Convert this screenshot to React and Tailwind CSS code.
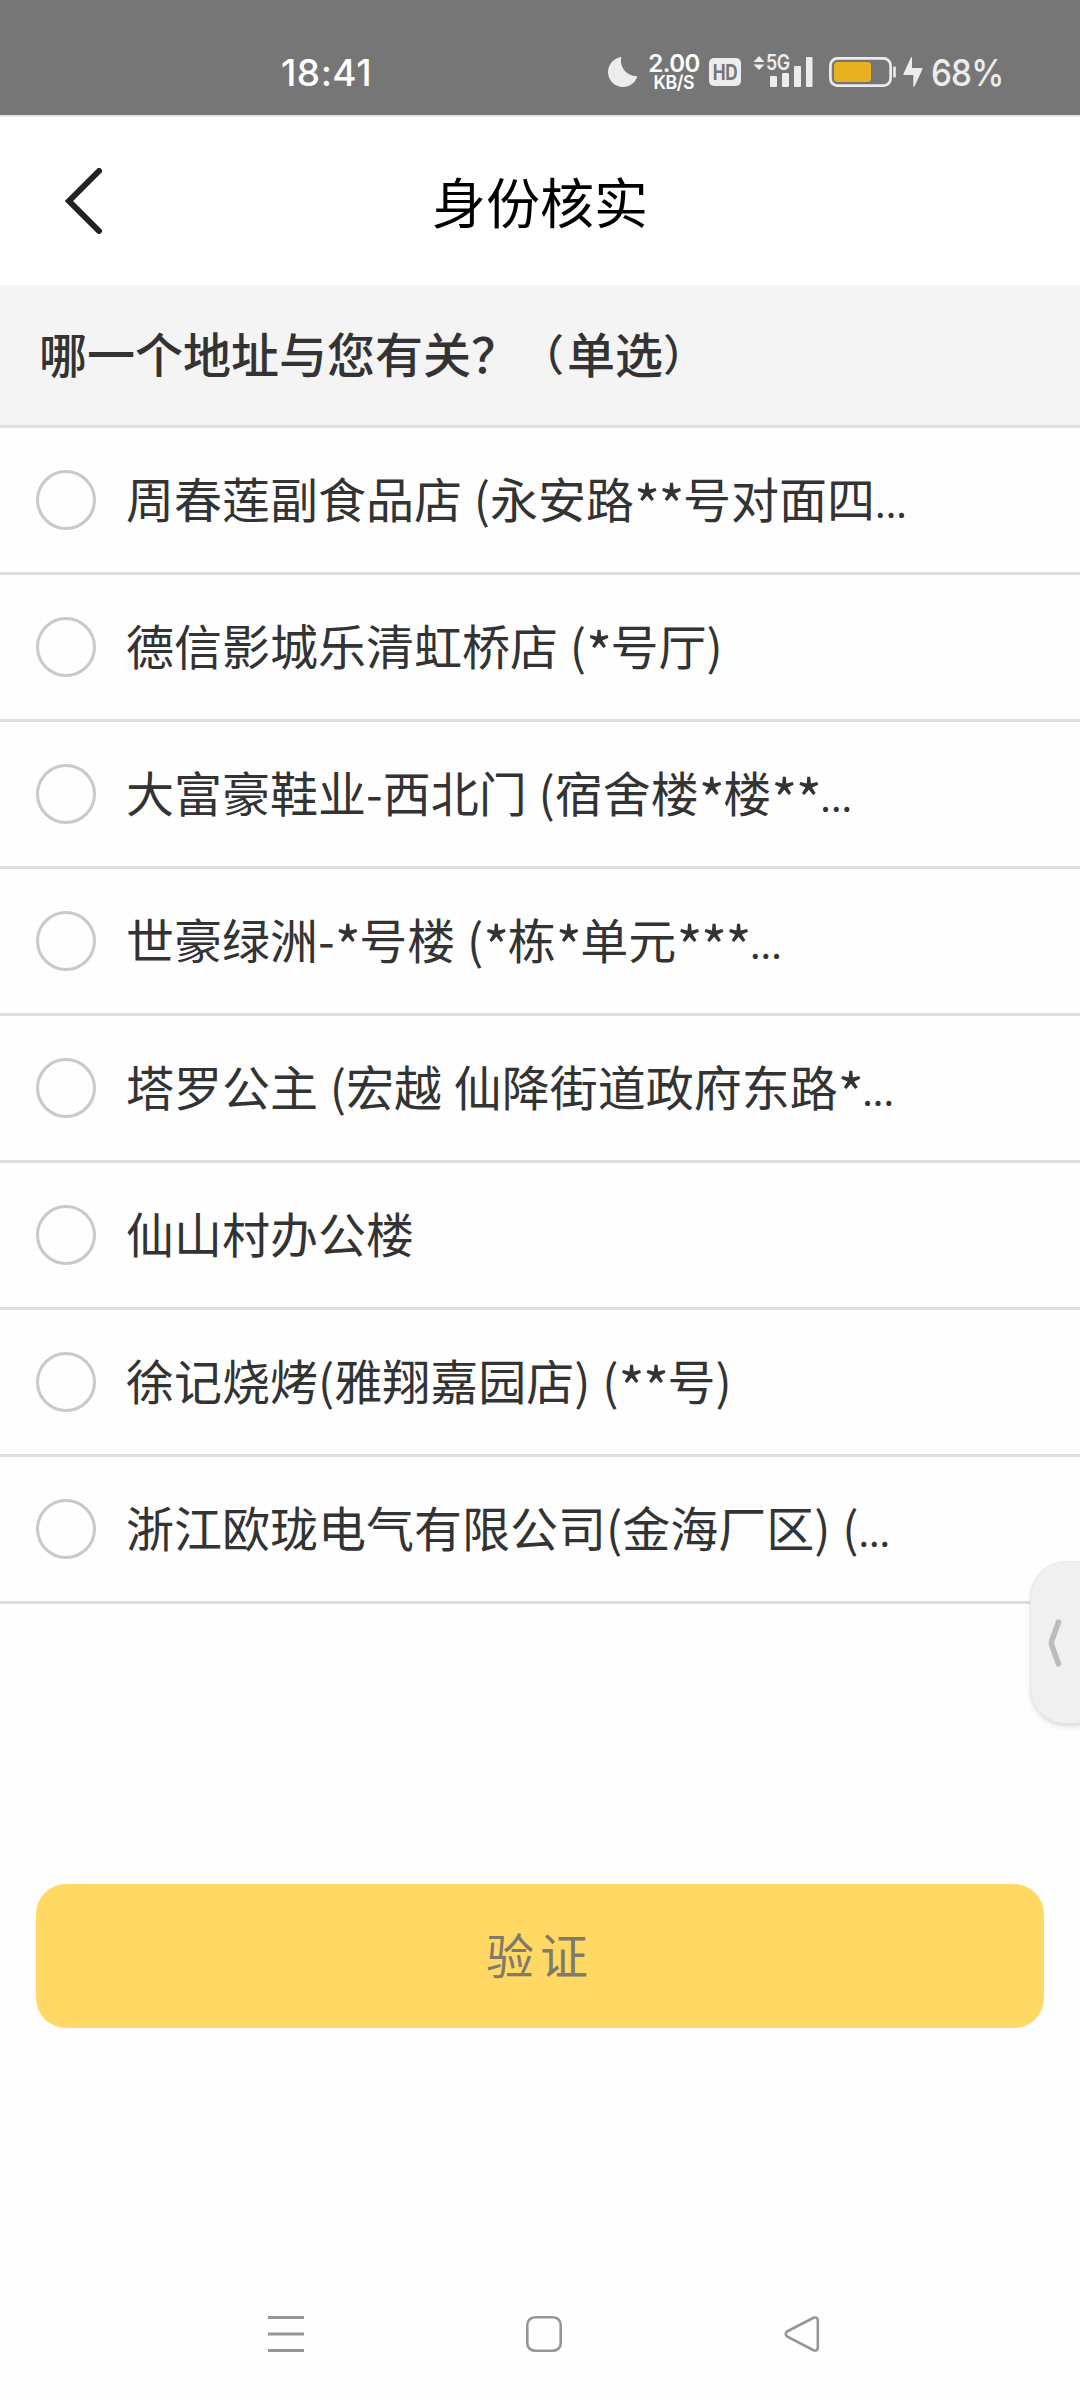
import React, { useState } from 'react';

const addresses = [
    '周春莲副食品店 (永安路**号对面四...',
    '德信影城乐清虹桥店 (*号厅)',
    '大富豪鞋业-西北门 (宿舍楼*楼**...',
    '世豪绿洲-*号楼 (*栋*单元***...',
    '塔罗公主 (宏越 仙降街道政府东路*...',
    '仙山村办公楼',
    '徐记烧烤(雅翔嘉园店) (**号)',
    '浙江欧珑电气有限公司(金海厂区) (...',
];

const StatusBar = () => (
    <div className="h-[117px] bg-[#767676] border-b-2 border-[#e6e4e4] flex items-center pt-[29px] font-['Inter','Noto_Sans_CJK_SC',sans-serif] text-[#ececec]">
        <span className="ml-[281px] w-[327px] text-[37px] leading-none font-medium tracking-[0.5px] text-white">18:41</span>
        <svg className="w-[30px] h-[30px] shrink-0" viewBox="0 0 30 30" fill="currentColor">
            <path d="M13.5 0C11 8 17 19 29.3 19.2C27.5 25.5 21.800 30 15 30C6.700 30 0 23.300 0 15C0 7.500 5.800 1 13.500 0Z" />
        </svg>
        <div className="ml-[10px] w-[52px] shrink-0 flex flex-col items-center font-semibold">
            <span className="text-[24px] leading-[21px] tracking-[-0.5px] text-white">2.00</span>
            <span className="text-[19px] leading-[17px] tracking-[-0.5px] scale-x-[0.93] text-white">KB/S</span>
        </div>
        <div className="ml-[9px] w-8 h-7 shrink-0 rounded-[5px] bg-[#ececec] text-[#767676] text-[21px] leading-none font-bold tracking-[-0.5px] flex items-center justify-center">
            <span className="scale-x-[0.82]">HD</span>
        </div>
        <div className="relative ml-3 w-[60px] h-[32px] shrink-0">
            <svg className="w-[60px] h-[32px]" viewBox="0 0 60 32" fill="currentColor">
                <path d="M6 0L11.500 6H0.500ZM6 14L11.500 8.500H0.500Z" />
                <rect x="17" y="20" width="7" height="11" rx="1" />
                <rect x="29" y="17" width="7" height="14" rx="1" />
                <rect x="41" y="10" width="7" height="21" rx="1" />
                <rect x="53" y="1" width="6.500" height="30" rx="1" />
            </svg>
            <span className="absolute left-[13px] top-[-3px] text-[21px] leading-[20px] font-semibold tracking-[-0.5px] origin-left scale-x-[0.85]">5G</span>
        </div>
        <svg className="ml-4 w-[67px] h-[30px] shrink-0" viewBox="0 0 67 30" fill="none">
            <rect x="1.400" y="1.400" width="60.200" height="27.200" rx="7" stroke="#ececec" strokeWidth="2.700" />
            <rect x="5" y="5" width="37" height="20" rx="3.500" fill="#e9b020" />
            <rect x="64.200" y="9.500" width="2.600" height="11" rx="1" fill="#ececec" />
        </svg>
        <svg className="ml-[7px] w-5 h-[30px] shrink-0" viewBox="0 0 20 30" fill="currentColor">
            <path d="M8 0.500Q9 -0.500 9 1V11H18.500Q20 11 19.300 12.500L11.500 29.500Q10.500 30.500 10.300 29V18H1.500Q0 18 0.500 16.500Z" />
        </svg>
        <span className="ml-2 text-[37px] leading-none font-medium tracking-[-1px] origin-left scale-x-[0.9]">68%</span>
    </div>
);

const Header = () => (
    <header className="h-[168px] bg-white grid grid-cols-[1fr_auto_1fr] items-center">
        <button className="ml-[64px] w-[40px]" aria-label="返回">
            <svg className="w-[40px] h-[66px]" viewBox="0 0 40 66" fill="none" stroke="#222" strokeWidth="6" strokeLinecap="round">
                <path d="M35 3L5 33L35 63" strokeLinejoin="miter" />
            </svg>
        </button>
        <h1 className="text-[54px] leading-none text-black">身份核实</h1>
    </header>
);

const Question = () => (
    <h2 className="h-[143px] bg-[#f4f4f4] border-b-3 border-[#dedede] pl-[39px] pb-[6px] flex items-center text-[48px] leading-none font-medium text-[#333]">
        <span>哪一个地址与您有关？</span>
        <span className="w-[48px] pr-[3px] flex justify-end text-[43px]">（</span>
        <span>单选</span>
        <span className="text-[43px]">）</span>
    </h2>
);

// Masked digits sit on the text's middle line, and the trailing dots are set small.
const AddressText = ({ text }) => (
    <span className="mb-[6px] text-[48px] leading-none [word-spacing:1px] whitespace-nowrap text-[#333]">
        {text.split(/(\*+|\.\.\.)/).map((part, i) => {
            if (part.startsWith('*')) {
                return <span key={i} className="relative top-[9px] text-[56px] leading-[0px] tracking-[-1.6px]">{part}</span>;
            }
            if (part === '...') {
                return <span key={i} className="text-[38px] leading-[0px]">{part}</span>;
            }
            return part;
        })}
    </span>
);

const AddressRow = ({ text, checked, onSelect }) => (
    <li className="h-[147px] border-b-3 border-[#dedede] flex items-center pl-9 cursor-pointer" onClick={onSelect}>
        <span className="w-[60px] h-[60px] shrink-0 rounded-full border-3 border-[#c9c9c9] mr-[30px] flex items-center justify-center">
            {checked && <span className="w-8 h-8 rounded-full bg-[#ffd964]" />}
        </span>
        <AddressText text={text} />
    </li>
);

const NavBar = () => (
    <nav className="mt-auto h-[132px] pl-[157px] flex items-center text-[#969696]">
        <div className="w-[258px] flex justify-center">
            <svg className="w-9 h-9" viewBox="0 0 36 36" stroke="currentColor" strokeWidth="3">
                <path d="M0 1.500H36M0 18H36M0 34.500H36" />
            </svg>
        </div>
        <div className="w-[258px] flex justify-center">
            <svg className="w-9 h-9" viewBox="0 0 36 36" fill="none" stroke="currentColor" strokeWidth="2.600">
                <rect x="1.300" y="1.300" width="33.400" height="33.400" rx="7.500" />
            </svg>
        </div>
        <div className="w-[258px] flex justify-center">
            <svg className="w-9 h-9" viewBox="0 0 36 36" fill="none" stroke="currentColor" strokeWidth="2.600">
                <path d="M3 15.500L29.500 1.800Q33.800 0.500 33.800 4.500V31.500Q33.800 35.500 29.500 34.200L3 20.500Q0.500 18 3 15.500Z" />
            </svg>
        </div>
    </nav>
);

const App = () => {
    const [selected, setSelected] = useState(null);

    return (
        <div className="relative w-[1080px] h-[2400px] bg-[#fefefe] flex flex-col overflow-hidden font-['Noto_Sans_CJK_SC',sans-serif]">
            <StatusBar />
            <Header />
            <Question />
            <ul>
                {addresses.map((text, i) => (
                    <AddressRow key={text} text={text} checked={selected === i} onSelect={() => setSelected(i)} />
                ))}
            </ul>
            <button className="mt-[280px] mx-9 h-[144px] pb-[6px] shrink-0 rounded-[30px] bg-[#ffd964] text-[48px] leading-none tracking-[6px] text-[#807a6a]">
                验证
            </button>
            <NavBar />
            <div className="absolute left-[1030px] top-[1561px] w-[80px] h-[163px] rounded-[36px] bg-[#f0f0f0] border border-[#e6e6e6] shadow-md flex items-center pl-[17px]">
                <svg className="w-[14px] h-[48px]" viewBox="0 0 14 48" fill="none" stroke="#bcbcbc" strokeWidth="5.500" strokeLinecap="round" strokeLinejoin="round">
                    <path d="M10.500 3L4 21Q3 24 4 27L10.500 45" />
                </svg>
            </div>
        </div>
    );
};

export default App;
